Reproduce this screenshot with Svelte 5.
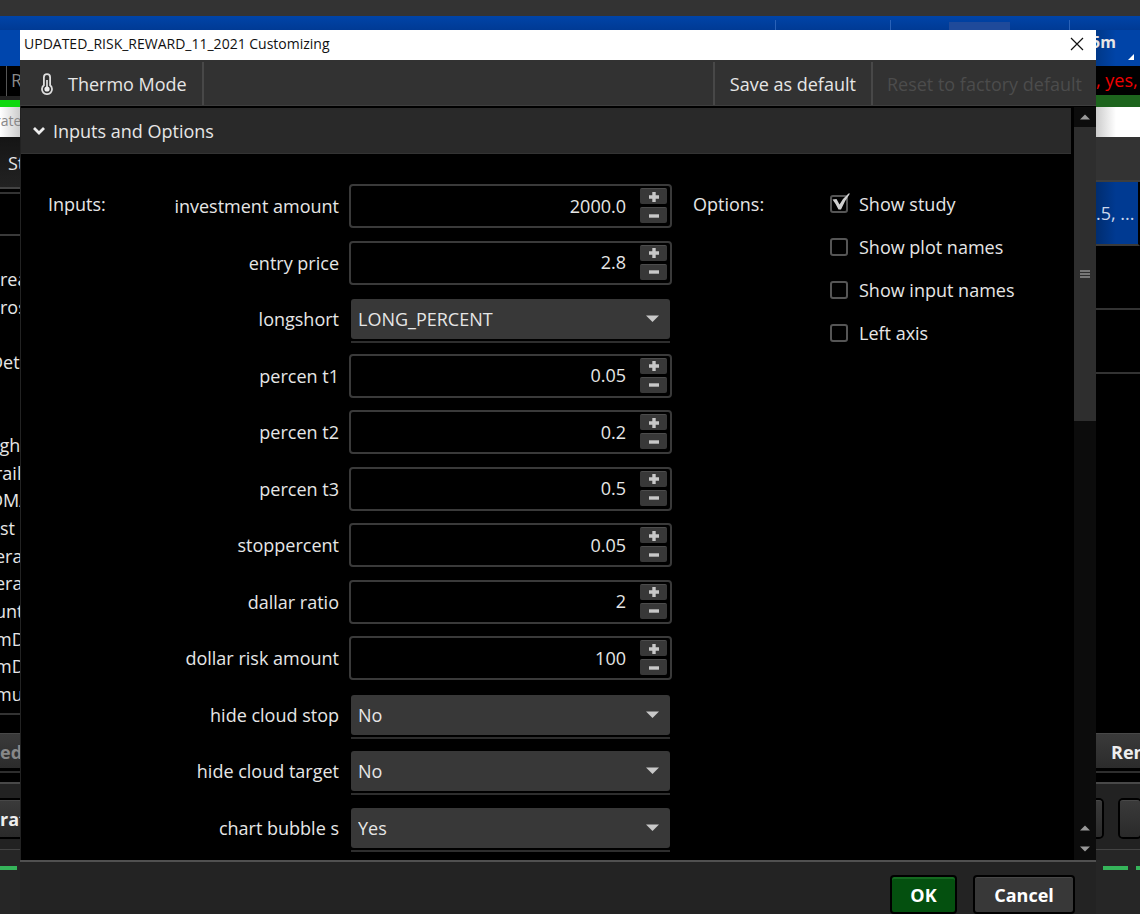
<script>
    let inputs = $state([
        { id: "investment", label: "investment amount", value: "2000.0", step: 1 },
        { id: "entry", label: "entry price", value: "2.8", step: 0.1 },
        { id: "longshort", label: "longshort", value: "LONG_PERCENT", choices: ["LONG_PERCENT", "SHORT_PERCENT"] },
        { id: "t1", label: "percen t1", value: "0.05", step: 0.01 },
        { id: "t2", label: "percen t2", value: "0.2", step: 0.1 },
        { id: "t3", label: "percen t3", value: "0.5", step: 0.1 },
        { id: "stop", label: "stoppercent", value: "0.05", step: 0.01 },
        { id: "ratio", label: "dallar ratio", value: "2", step: 1 },
        { id: "risk", label: "dollar risk amount", value: "100", step: 1 },
        { id: "cloudstop", label: "hide cloud stop", value: "No", choices: ["No", "Yes"] },
        { id: "cloudtarget", label: "hide cloud target", value: "No", choices: ["No", "Yes"] },
        { id: "bubbles", label: "chart bubble s", value: "Yes", choices: ["No", "Yes"] },
    ]);

    let options = $state([
        { label: "Show study", checked: true },
        { label: "Show plot names", checked: false },
        { label: "Show input names", checked: false },
        { label: "Left axis", checked: false },
    ]);

    // study list of the window behind the dialog
    const studies = ["rea", "ros", "", "Dete", "", "", "igh", "rail", "DMA", "st", "era", "era", "unt", "mD", "mD", "mu"];
    const cut = ["Dete", "DMA"];
    const nudged = ["igh", "rail", "era", "unt", "mD", "mu"];

    function bump(item, dir) {
        const decimals = (item.value.split(".")[1] || "").length;
        item.value = (Number(item.value) + dir * item.step).toFixed(decimals);
    }
</script>

<div class="screen">
    <div class="strip"></div>
    <div class="bluebar">
        <span class="tick first"></span>
        <span class="tick second"></span>
        <span class="tab"></span>
        <span class="tick third"></span>
    </div>

    <div class="columns">
        <div class="side left">
            <div class="blue"></div>
            <div class="ticker"><span>R</span></div>
            <div class="green"></div>
            <div class="white">rate</div>
            <div class="tabs">St</div>
            <div class="blank"></div>
            <div class="search"></div>
            <div class="list">
                {#each studies as name}
                    <div class:cut={cut.includes(name)} class:nudged={nudged.includes(name)}>{name}</div>
                {/each}
            </div>
            <div class="under">
                <div class="key dim">ed</div>
            </div>
            <div class="panel">
                <div class="key">rat</div>
            </div>
            <div class="status"><i></i></div>
        </div>

        <div class="dialog" role="dialog" aria-labelledby="title">
            <div class="titlebar">
                <span id="title">UPDATED_RISK_REWARD_11_2021 Customizing</span>
                <button class="close" aria-label="Close">
                    <svg width="14" height="14" viewBox="0 0 14 14"><path d="M1 1L13 13M13 1L1 13" stroke="#111" stroke-width="1.2" fill="none" /></svg>
                </button>
            </div>

            <div class="toolbar">
                <button class="thermo">
                    <svg width="14" height="22" viewBox="0 0 14 22">
                        <path d="M3.9 12.2V4.2a3.1 3.1 0 0 1 6.2 0v8a5 5 0 1 1-6.2 0z" fill="none" stroke="#ddd" stroke-width="1.8" />
                        <path d="M7 7v8" stroke="#eee" stroke-width="1.6" />
                        <circle cx="7" cy="16" r="2.6" fill="#eee" />
                    </svg>
                    Thermo Mode
                </button>
                <button class="save">Save as default</button>
                <button class="reset" disabled>Reset to factory default</button>
            </div>

            <div class="content">
                <div class="main">
                    <button class="section">
                        <svg width="12" height="10" viewBox="0 0 12 10"><path d="M1 2L6 7L11 2" fill="none" stroke="#eee" stroke-width="2.8" /></svg>
                        Inputs and Options
                    </button>
                    <div class="form">
                        <div class="heading">Inputs:</div>
                        <div class="fields">
                            {#each inputs as item}
                                <div class="row">
                                    <label for={item.id}>{item.label}</label>
                                    {#if item.choices}
                                        <div class="drop">
                                            <select id={item.id} bind:value={item.value}>
                                                {#each item.choices as choice}
                                                    <option>{choice}</option>
                                                {/each}
                                            </select>
                                            <svg width="14" height="8" viewBox="0 0 14 8"><path d="M0 0.5H13L6.5 7z" fill="#c8c8c8" /></svg>
                                        </div>
                                    {:else}
                                        <div class="number">
                                            <input id={item.id} type="text" inputmode="decimal" bind:value={item.value} />
                                            <div class="spin">
                                                <button aria-label="Increase" onclick={() => bump(item, 1)}>
                                                    <svg width="10" height="10" viewBox="0 0 10 10"><path d="M5 0V10M0 5H10" stroke="#c8c8c8" stroke-width="3.4" /></svg>
                                                </button>
                                                <button aria-label="Decrease" onclick={() => bump(item, -1)}>
                                                    <svg width="10" height="10" viewBox="0 0 10 10"><path d="M0 5H10" stroke="#c8c8c8" stroke-width="3.4" /></svg>
                                                </button>
                                            </div>
                                        </div>
                                    {/if}
                                </div>
                            {/each}
                        </div>
                        <div class="heading">Options:</div>
                        <div class="options">
                            {#each options as option}
                                <label>
                                    <span class="box">
                                        <input type="checkbox" bind:checked={option.checked} />
                                        {#if option.checked}
                                            <svg width="20" height="18" viewBox="0 0 20 18"><path d="M1.5 6.5L5.5 6L8.5 11.5Q12 5 17.5 0.5L19 0.5Q13.5 8 10 16.5H7.5Q5 11 1.5 6.5z" fill="#d0d0d0" /></svg>
                                        {/if}
                                    </span>
                                    {option.label}
                                </label>
                            {/each}
                        </div>
                    </div>
                </div>

                <div class="scrollbar">
                    <div class="arrow"><svg width="10" height="6" viewBox="0 0 10 6"><path d="M0 5.5L5 0.5L10 5.5z" fill="#999" /></svg></div>
                    <div class="thumb"><i></i><i></i><i></i></div>
                    <div class="arrows">
                        <svg width="10" height="6" viewBox="0 0 10 6"><path d="M0 5.5L5 0.5L10 5.5z" fill="#999" /></svg>
                        <svg width="10" height="6" viewBox="0 0 10 6"><path d="M0 0.5L5 5.5L10 0.5z" fill="#999" /></svg>
                    </div>
                </div>
            </div>

            <div class="footer">
                <button class="ok">OK</button>
                <button class="cancel">Cancel</button>
            </div>
        </div>

        <div class="side right">
            <div class="blue">5m
                <svg width="6" height="6" viewBox="0 0 6 6"><path d="M6 0V6H0z" fill="#fff" /></svg>
            </div>
            <div class="red">, yes,</div>
            <div class="green"></div>
            <div class="white"></div>
            <div class="gray"></div>
            <div class="selected">.5, ...</div>
            <div class="cell"></div>
            <div class="cell"></div>
            <div class="space"></div>
            <div class="under">
                <div class="key">Rem</div>
            </div>
            <div class="panel">
                <div class="key stub"></div>
                <div class="key edge"></div>
            </div>
            <div class="status"><i></i><i></i></div>
        </div>
    </div>
</div>

<style>
    :global(body) {
        background: #000;
    }
    .screen, .screen * {
        box-sizing: border-box;
    }
    .screen {
        display: flex;
        flex-direction: column;
        min-height: 100vh;
        overflow: hidden;
        color: #e6e6e6;
        font-family: "Open Sans", "Noto Sans", sans-serif;
        font-size: 18px;
        line-height: 24px;
    }
    button, input, select {
        font: inherit;
        color: inherit;
        margin: 0;
        padding: 0;
        border: 0;
        background: none;
    }
    svg {
        display: block;
        flex: none;
    }
    .strip {
        height: 16px;
        background: #333;
    }
    .bluebar {
        display: flex;
        justify-content: flex-end;
        align-items: flex-end;
        height: 14px;
        padding-right: 70px;
        background: linear-gradient(#0044a8, #003a94);
    }
    .tick {
        width: 1px;
        height: 10px;
        background: #2a62b8;
    }
    .first {
        margin-right: 114px;
    }
    .second {
        margin-right: 58px;
    }
    .tab {
        width: 61px;
        height: 8px;
        margin-right: 59px;
        background: #1f4a9a;
    }
    .columns {
        flex: 1;
        display: grid;
        grid-template-columns: 20px minmax(0, 1fr) 44px;
    }

    /* window behind */
    .side {
        display: flex;
        flex-direction: column;
        overflow: hidden;
        white-space: nowrap;
    }
    .blue {
        position: relative;
        height: 36px;
        background: #0046ad;
        font-size: 16px;
        font-weight: bold;
    }
    .right .blue {
        background: linear-gradient(90deg, #003888, #0044a8 20px);
        text-indent: -5px;
    }
    .blue svg {
        position: absolute;
        right: 6px;
        bottom: 6px;
    }
    .ticker {
        height: 34px;
        padding-left: 6px;
        border-bottom: 4px solid #222;
        color: #888;
    }
    .ticker span {
        display: block;
        height: 30px;
        padding: 2px 0 0 4px;
        border-left: 1px solid #555;
    }
    .left .green {
        height: 7px;
        background: #0fd80f;
    }
    .right .green {
        height: 12px;
        background: #1d641d;
    }
    .white {
        height: 30px;
        background: linear-gradient(90deg, #fff, #ccc);
        color: #888;
        font-size: 14px;
        line-height: 28px;
    }
    .left .white {
        text-indent: -5px;
    }
    .right .white {
        background: linear-gradient(90deg, #ccc, #fff 20px);
    }
    .tabs {
        height: 52px;
        padding: 14px 0 0 8px;
        border-bottom: 2px solid #444;
        background: linear-gradient(#151515, #222);
    }
    .blank {
        height: 5px;
        border-bottom: 2px solid #333;
    }
    .search {
        height: 42px;
        border-bottom: 2px solid #3a3a3a;
    }
    .list {
        flex: 1;
        display: grid;
        grid-auto-rows: 1fr;
        align-items: center;
        padding: 29px 0 5px;
        border-bottom: 2px solid #333;
    }
    .cut {
        margin-left: -10px;
    }
    .nudged {
        margin-left: -5px;
    }
    .under {
        height: 67px;
        padding-top: 18px;
    }
    .under .key {
        height: 40px;
        border-bottom: 2px solid #2e2e2e;
        box-shadow: inset 0 -3px #000;
    }
    .key {
        background: linear-gradient(#3a3a3a, #2a2a2a);
        border-top: 1px solid #484848;
        font-weight: bold;
        line-height: 36px;
        color: #eee;
    }
    .dim {
        color: #888;
    }
    .panel {
        display: flex;
        height: 68px;
        padding-top: 16px;
        border-top: 2px solid #484848;
        border-bottom: 1px solid #444;
        background: #222;
    }
    .panel .key {
        width: 20px;
        height: 37px;
        box-shadow: 0 0 0 2px #000;
    }
    .status {
        display: flex;
        gap: 8px;
        height: 64px;
        padding-top: 16px;
        background: #262626;
    }
    .status i {
        width: 17px;
        height: 4px;
        background: #35b45a;
    }
    .right .status i {
        flex: none;
        width: 25px;
    }
    .red {
        height: 29px;
        line-height: 29px;
        color: #f00000;
    }
    .gray {
        height: 45px;
        border-bottom: 2px solid #3e3e3e;
        background: #333;
    }
    .selected {
        height: 64px;
        border-right: 2px solid #000;
        border-bottom: 2px solid #3a3a3a;
        background: linear-gradient(90deg, #002d70, #003a92 20px);
        line-height: 62px;
        color: #ccd8ec;
    }
    .cell {
        height: 64px;
        border-bottom: 2px solid #333;
    }
    .space {
        flex: 1;
    }
    .right .under .key {
        padding-left: 15px;
    }
    .right .panel {
        gap: 18px;
    }
    .right .stub {
        width: 6px;
        border-radius: 0 3px 3px 0;
    }
    .right .edge {
        border-radius: 3px;
    }
    .right .status {
        padding-left: 7px;
    }

    /* dialog */
    .dialog {
        display: flex;
        flex-direction: column;
        min-width: 0;
        background: #000;
    }
    .titlebar {
        display: flex;
        justify-content: space-between;
        align-items: center;
        height: 30px;
        padding: 0 12px 2px 4px;
        background: #fff;
        color: #111;
        font-size: 14px;
    }
    .toolbar {
        display: flex;
        height: 46px;
        padding-top: 2px;
        border-bottom: 1px solid #3e3e3e;
        background: #323232;
    }
    .thermo {
        display: flex;
        align-items: center;
        gap: 14px;
        padding: 0 15px 0 20px;
        border-right: 2px solid #484848;
    }
    .save {
        margin-left: auto;
        padding: 0 15px;
        border-left: 2px solid #484848;
        border-right: 2px solid #484848;
    }
    .reset {
        padding: 0 14px;
        color: #4c4c4c;
    }
    .content {
        flex: 1;
        display: flex;
        gap: 3px;
        padding-top: 1px;
        border-left: 1px solid #222;
    }
    .main {
        flex: 1;
        display: flex;
        flex-direction: column;
    }
    .section {
        display: flex;
        align-items: center;
        gap: 8px;
        height: 47px;
        padding-left: 12px;
        border-top: 1px solid #000;
        border-bottom: 1px solid #333;
        background: #292929;
    }
    .form {
        flex: 1;
        display: flex;
        padding-left: 27px;
    }
    .heading {
        width: 60px;
        padding-top: 38px;
    }
    .fields {
        display: grid;
        grid-auto-rows: 1fr;
        width: 564px;
        padding: 24px 0 4px;
        margin-right: 21px;
    }
    .row {
        display: flex;
        align-items: center;
        justify-content: flex-end;
        gap: 10px;
    }
    .number {
        display: flex;
        width: 323px;
        height: 44px;
        padding: 2px 3px 3px;
        border: 2px solid #3a3a3a;
        border-radius: 4px;
    }
    .number input {
        flex: 1;
        min-width: 0;
        padding-right: 14px;
        text-align: right;
        outline: none;
    }
    .spin {
        display: grid;
        gap: 3px;
        width: 27px;
    }
    .spin button {
        display: flex;
        align-items: center;
        justify-content: center;
        border-top: 1px solid #4c4c4c;
        border-radius: 2px;
        background: #383838;
    }
    .drop {
        position: relative;
        width: 319px;
        margin-right: 2px;
        border-radius: 3px;
    }
    .drop::after {
        content: "";
        position: absolute;
        left: 0;
        right: 0;
        bottom: -4px;
        height: 2px;
        background: #2e2e2e;
    }
    .drop select {
        display: block;
        width: 100%;
        height: 40px;
        padding-left: 7px;
        border-radius: 3px;
        background: #383838;
        appearance: none;
    }
    .drop svg {
        position: absolute;
        right: 10px;
        top: 16px;
        pointer-events: none;
    }
    .row:has(.drop) {
        gap: 12px;
    }
    .options {
        display: flex;
        flex-direction: column;
        gap: 19px;
        margin-left: 77px;
        padding-top: 38px;
    }
    .options label {
        display: flex;
        align-items: center;
        gap: 11px;
        white-space: nowrap;
    }
    .box {
        position: relative;
        height: 18px;
    }
    .box input {
        display: block;
        width: 18px;
        height: 18px;
        border: 2px solid #555;
        border-radius: 3px;
        appearance: none;
    }
    .box svg {
        position: absolute;
        left: 1px;
        top: -2px;
        pointer-events: none;
    }
    .scrollbar {
        display: flex;
        flex-direction: column;
        width: 22px;
        background: #0c0c0c;
    }
    .arrow {
        display: flex;
        align-items: center;
        justify-content: center;
        height: 20px;
    }
    .thumb {
        display: flex;
        flex-direction: column;
        align-items: center;
        justify-content: center;
        gap: 1px;
        height: 294px;
        background: #2e2e2e;
    }
    .thumb i {
        width: 10px;
        height: 2px;
        background: #777;
    }
    .arrows {
        display: flex;
        flex-direction: column;
        align-items: center;
        gap: 15px;
        margin-top: auto;
        padding-bottom: 8px;
    }
    .footer {
        display: flex;
        justify-content: flex-end;
        gap: 16px;
        height: 54px;
        padding: 13px 21px 0 0;
        border-top: 2px solid #505050;
        background: #232323;
    }
    .footer button {
        border: 2px solid #000;
        border-radius: 4px;
        box-shadow: inset 0 1px #484848;
        background: #383838;
        color: #fff;
        font-weight: bold;
    }
    .footer .ok {
        width: 67px;
        background: #04500f;
        box-shadow: inset 0 2px #146a20;
    }
    .footer .cancel {
        width: 102px;
    }
</style>
